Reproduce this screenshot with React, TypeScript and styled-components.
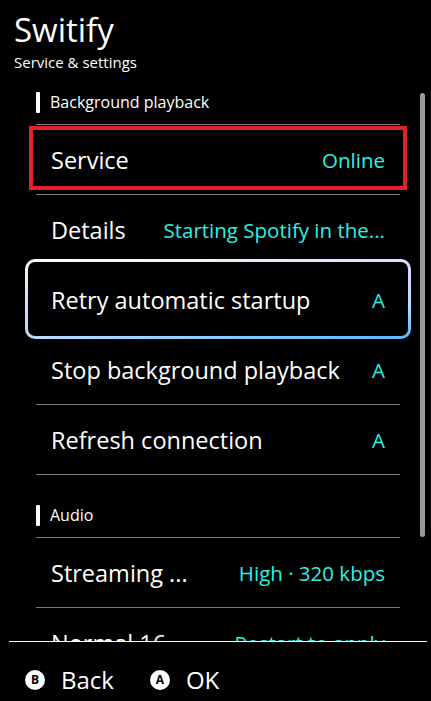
import React from "react";
import styled, { createGlobalStyle, css } from "styled-components";

const GlobalStyle = createGlobalStyle`
  html, body {
    margin: 0;
    padding: 0;
    background: #000;
  }
  body {
    font-family: "Open Sans", "Noto Sans", sans-serif;
    color: #fff;
  }
`;

const Screen = styled.div`
  width: 431px;
  height: 701px;
  display: flex;
  flex-direction: column;
  background: #000;
  overflow: hidden;
`;

const Header = styled.header`
  height: 80px;
  padding: 10px 14px 0;
  box-sizing: border-box;
  flex-shrink: 0;
`;

const Title = styled.h1`
  margin: 0;
  font-size: 33px;
  font-weight: 400;
  line-height: 40px;
  color: #fff;
`;

const Subtitle = styled.div`
  font-size: 15px;
  line-height: 20px;
  color: #fff;
  margin-top: 2px;
`;

const Body = styled.div`
  flex: 1;
  display: flex;
  min-height: 0;
  padding-left: 25px;
`;

const List = styled.div`
  width: 386px;
  box-sizing: border-box;
  padding: 0 11px;
  display: flex;
  flex-direction: column;
  overflow: hidden;
`;

const Scrollbar = styled.div`
  width: 5px;
  height: 444px;
  margin: 13px 0 0 9px;
  border-radius: 3px;
  background: #9a9a9a;
`;

const SectionHeader = styled.div<{ $first?: boolean }>`
  flex-shrink: 0;
  display: flex;
  align-items: center;
  gap: 10px;
  padding: ${(p) => (p.$first ? "12px" : "30px")} 0 11px;
  border-bottom: 1px solid #7a7a7a;
  font-size: 16px;
  line-height: 21px;

  &::before {
    content: "";
    width: 4px;
    height: 21px;
    border-radius: 1px;
    background: #fff;
  }
`;

const Row = styled.div<{ $focused?: boolean; $marked?: boolean }>`
  flex-shrink: 0;
  position: relative;
  height: 69px;
  display: flex;
  align-items: center;
  justify-content: space-between;
  gap: 20px;
  padding: 0 15px;
  border-bottom: 1px solid #7a7a7a;

  ${(p) =>
    p.$focused &&
    css`
      border-bottom-color: transparent;
      &::before {
        content: "";
        position: absolute;
        inset: -6px -11px -5px;
        border: 3px solid transparent;
        border-radius: 10px;
        background: linear-gradient(#000, #000) padding-box,
          linear-gradient(175deg, #ffffff 0%, #e6d2ff 35%, #b8dcff 70%, #52b6ff 100%)
            border-box;
      }
    `}

  ${(p) =>
    p.$marked &&
    css`
      &::after {
        content: "";
        position: absolute;
        top: 1px;
        bottom: 4px;
        left: -7px;
        right: -7px;
        border: 4px solid #e3212a;
        pointer-events: none;
      }
    `}
`;

const Label = styled.span`
  position: relative;
  font-size: 23.5px;
  color: #fff;
  white-space: nowrap;
  overflow: hidden;
  text-overflow: ellipsis;
  min-width: 0;
`;

const Value = styled.span`
  position: relative;
  font-size: 20.5px;
  color: #2ef0e2;
  white-space: nowrap;
  flex-shrink: 0;
`;

const Footer = styled.footer`
  flex-shrink: 0;
  height: 60px;
  box-sizing: border-box;
  margin: 0 4px 0 9px;
  border-top: 1px solid #fff;
  display: flex;
  align-items: center;
  gap: 36px;
  padding: 16px 0 0 16px;
`;

const FooterAction = styled.div`
  display: flex;
  align-items: center;
  gap: 16px;
  font-size: 24px;
`;

const ButtonGlyph = styled.span`
  width: 20px;
  height: 20px;
  border-radius: 50%;
  background: #fff;
  color: #000;
  font-size: 12px;
  font-weight: 700;
  display: flex;
  align-items: center;
  justify-content: center;
`;

const App: React.FC = () => {
  return (
    <Screen>
      <GlobalStyle />
      <Header>
        <Title>Switify</Title>
        <Subtitle>Service &amp; settings</Subtitle>
      </Header>
      <Body>
        <List>
          <SectionHeader $first>Background playback</SectionHeader>
          <Row $marked>
            <Label>Service</Label>
            <Value>Online</Value>
          </Row>
          <Row>
            <Label>Details</Label>
            <Value>Starting Spotify in the...</Value>
          </Row>
          <Row $focused>
            <Label>Retry automatic startup</Label>
            <Value>A</Value>
          </Row>
          <Row>
            <Label>Stop background playback</Label>
            <Value>A</Value>
          </Row>
          <Row>
            <Label>Refresh connection</Label>
            <Value>A</Value>
          </Row>
          <SectionHeader>Audio</SectionHeader>
          <Row>
            <Label>Streaming ...</Label>
            <Value>High · 320 kbps</Value>
          </Row>
          <Row>
            <Label>Normal 16...</Label>
            <Value>Restart to apply</Value>
          </Row>
        </List>
        <Scrollbar />
      </Body>
      <Footer>
        <FooterAction>
          <ButtonGlyph>B</ButtonGlyph>
          Back
        </FooterAction>
        <FooterAction>
          <ButtonGlyph>A</ButtonGlyph>
          OK
        </FooterAction>
      </Footer>
    </Screen>
  );
};

export default App;
